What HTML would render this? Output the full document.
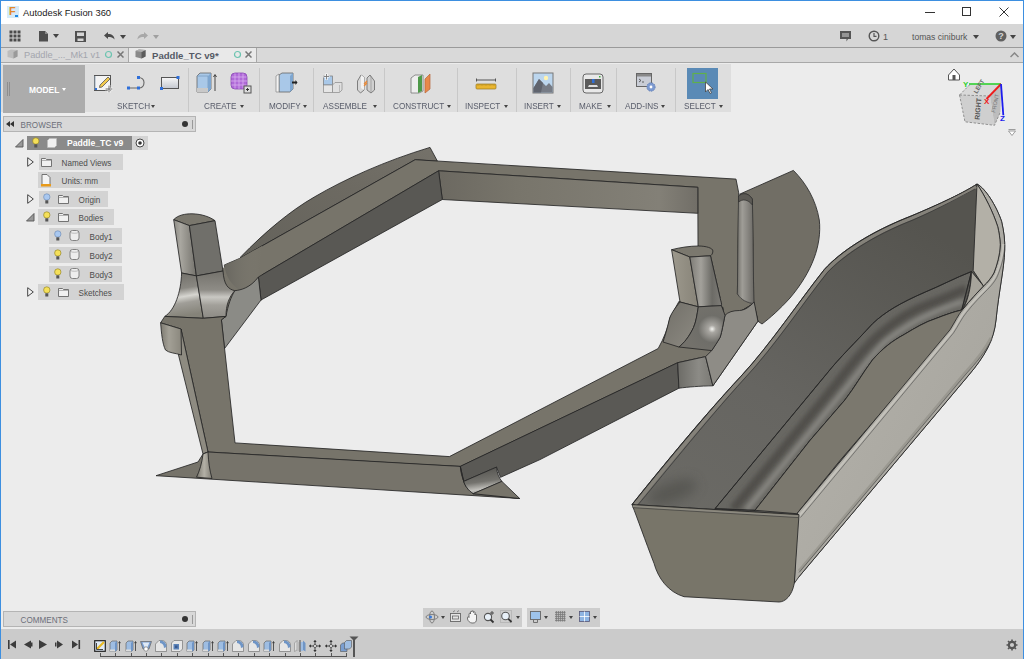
<!DOCTYPE html>
<html><head><meta charset="utf-8">
<style>
*{margin:0;padding:0;box-sizing:border-box}
html,body{width:1024px;height:659px;overflow:hidden;background:#ececec;font-family:"Liberation Sans",sans-serif}
.a{position:absolute}
.t{position:absolute;white-space:nowrap;line-height:1}
#title{left:0;top:0;width:1024px;height:24px;background:#fff;border-top:1px solid #3d8fe0}
#tbar{left:1px;top:24px;width:1022px;height:23px;background:#d6d6d6}
#tbline{left:1px;top:47px;width:1022px;height:1px;background:#9a9a9a}
#tabs{left:1px;top:48px;width:1022px;height:14px;background:#d9d9d9}
#tabline{left:1px;top:62px;width:1022px;height:1px;background:#a8a8a8}
#lb{left:0;top:0;width:1px;height:659px;background:#3d8fe0}
#rb{left:1023px;top:0;width:1px;height:659px;background:#3d8fe0}
.rl{font-size:9.6px;color:#585c6a;top:101.3px;transform:scaleX(0.85);transform-origin:0 0}
.sep{position:absolute;top:68px;width:1px;height:44px;background:#c8c8c8}
.dd{position:absolute;width:0;height:0;border-left:2.5px solid transparent;border-right:2.5px solid transparent;border-top:3px solid #444}
.row{position:absolute;height:16px;background:#d3d3d3}
.bt{font-size:9px;color:#4c4c4c;transform:translate(0.6px,0.6px) scaleX(0.9);transform-origin:0 0}
</style></head><body>
<div id="title" class="a"></div>
<div id="tbar" class="a"></div>
<div id="tbline" class="a"></div>
<div id="tabs" class="a"></div>
<div id="tabline" class="a"></div>

<!-- title -->
<div class="a" style="left:7px;top:6px;width:12px;height:12px;background:#d6ebf8"></div>
<div class="t" style="left:9px;top:6px;font-size:11px;font-weight:bold;color:#e38a2c">F</div>
<div class="a" style="left:15px;top:15px;width:3px;height:2px;background:#1e88e5"></div>
<div class="t" style="left:23px;top:8px;font-size:9.4px;color:#1a1a1a">Autodesk Fusion 360</div>
<!-- window controls -->
<div class="a" style="left:925px;top:12px;width:10px;height:1px;background:#333"></div>
<div class="a" style="left:962px;top:7px;width:9px;height:9px;border:1px solid #333"></div>
<svg class="a" style="left:999px;top:7px" width="10" height="10"><path d="M0.5 0.5L9.5 9.5M9.5 0.5L0.5 9.5" stroke="#333" stroke-width="1"/></svg>

<!-- toolbar -->
<svg class="a" style="left:9px;top:30px" width="12" height="12"><g fill="#4a4a4a"><rect x="0.5" y="0.5" width="3" height="3"/><rect x="4.5" y="0.5" width="3" height="3"/><rect x="8.5" y="0.5" width="3" height="3"/><rect x="0.5" y="4.5" width="3" height="3"/><rect x="4.5" y="4.5" width="3" height="3"/><rect x="8.5" y="4.5" width="3" height="3"/><rect x="0.5" y="8.5" width="3" height="3"/><rect x="4.5" y="8.5" width="3" height="3"/><rect x="8.5" y="8.5" width="3" height="3"/></g></svg>
<svg class="a" style="left:39px;top:31px" width="9" height="11"><path d="M0 0H6L9 3V10.5H0Z" fill="#4f4f4f"/><path d="M6 0V3H9" fill="#8a8a8a"/></svg>
<div class="dd" style="left:53px;top:34px;border-top-width:4px;border-left-width:3px;border-right-width:3px"></div>
<svg class="a" style="left:75px;top:31px" width="11" height="11"><path d="M0 0H11V11H0Z" fill="#505050"/><rect x="2" y="1.5" width="7" height="3.5" fill="#d6d6d6"/><rect x="2.5" y="7.5" width="6" height="2.5" fill="#d6d6d6"/></svg>
<svg class="a" style="left:104px;top:32px" width="11" height="8"><path d="M0 3.5L4 0V2C8 2 10.5 4 10.5 7.5C9 5.5 7 5 4 5V7Z" fill="#4a4a4a"/></svg>
<div class="dd" style="left:120px;top:35px;border-top-width:4px;border-left-width:3px;border-right-width:3px"></div>
<svg class="a" style="left:137px;top:32px" width="11" height="8"><path d="M11 3.5L7 0V2C3 2 0.5 4 0.5 7.5C2 5.5 4 5 7 5V7Z" fill="#a8a8a8"/></svg>
<div class="dd" style="left:153px;top:35px;border-top:4px solid #a0a0a0;border-left-width:3px;border-right-width:3px"></div>

<svg class="a" style="left:840px;top:31px" width="11" height="11"><path d="M0 0H11V8H8L6.5 10.5V8H0Z" fill="#555"/><rect x="2" y="2.5" width="7" height="1" fill="#d6d6d6"/><rect x="2" y="4.5" width="7" height="1" fill="#d6d6d6"/></svg>
<svg class="a" style="left:868px;top:30px" width="12" height="12"><circle cx="6" cy="6" r="4.8" fill="none" stroke="#555" stroke-width="1.4"/><path d="M6 3V6.3H8.5" fill="none" stroke="#555" stroke-width="1.2"/></svg>
<div class="t" style="left:883px;top:32.5px;font-size:9px;color:#555">1</div>
<div class="t" style="left:912px;top:33px;font-size:8.6px;color:#555">tomas ciniburk</div>
<div class="dd" style="left:973px;top:35px;border-top-width:4px;border-left-width:3px;border-right-width:3px"></div>
<svg class="a" style="left:995px;top:30px" width="12" height="12"><circle cx="6" cy="6" r="5.5" fill="#606060"/><text x="6" y="9.3" font-family="Liberation Sans" font-weight="bold" font-size="9" fill="#d6d6d6" text-anchor="middle">?</text></svg>
<div class="dd" style="left:1010px;top:35px;border-top-width:4px;border-left-width:3px;border-right-width:3px"></div>

<!-- tabs -->
<div class="a" style="left:128px;top:48px;width:1px;height:14px;background:#a8a8a8"></div>
<div class="a" style="left:129px;top:48px;width:127px;height:14px;background:#e9e9e9"></div>
<div class="a" style="left:256px;top:48px;width:1px;height:14px;background:#a8a8a8"></div>
<svg class="a" style="left:7px;top:49px" width="11" height="10"><path d="M0.5 2L4 0.5L10.5 1V7.5L6.5 9.5L0.5 8Z" fill="#bdbdbd"/><path d="M6.5 3L10.5 1V7.5L6.5 9.5Z" fill="#9a9a9a"/></svg>
<div class="t" style="left:24px;top:51px;font-size:9.2px;color:#a3a5ad">Paddle_..._Mk1 v1</div>
<svg class="a" style="left:104px;top:50px" width="9" height="9"><circle cx="4.5" cy="4.5" r="3" fill="none" stroke="#6cc4b0" stroke-width="1.2"/></svg>
<svg class="a" style="left:117px;top:51px" width="7" height="7"><path d="M0.5 0.5L6.5 6.5M6.5 0.5L0.5 6.5" stroke="#777" stroke-width="1.5"/></svg>
<svg class="a" style="left:135px;top:49px" width="11" height="10"><path d="M0.5 2L4 0.5L10.5 1V7.5L6.5 9.5L0.5 8Z" fill="#8a8a8a"/><path d="M6.5 3L10.5 1V7.5L6.5 9.5Z" fill="#5c5c5c"/><path d="M0.5 2L4 0.5L10.5 1L6.5 3Z" fill="#b0b0b0"/></svg>
<div class="t" style="left:152px;top:51px;font-size:9.6px;font-weight:bold;color:#555a66">Paddle_TC v9*</div>
<svg class="a" style="left:233px;top:50px" width="9" height="9"><circle cx="4.5" cy="4.5" r="3" fill="none" stroke="#6cc4b0" stroke-width="1.2"/></svg>
<svg class="a" style="left:245px;top:51px" width="7" height="7"><path d="M0.5 0.5L6.5 6.5M6.5 0.5L0.5 6.5" stroke="#777" stroke-width="1.5"/></svg>
<svg class="a" style="left:1010px;top:52px" width="9" height="6"><path d="M0.5 5L4.5 1L8.5 5" fill="none" stroke="#888" stroke-width="1.5"/></svg>

<!-- ribbon -->
<div class="a" style="left:1px;top:64px;width:730px;height:48px;background:#dedede"></div>
<div class="a" style="left:3px;top:65px;width:82px;height:48px;background:#acacac"></div>
<div class="a" style="left:7px;top:82px;width:1px;height:14px;background:#8e8e8e"></div>
<div class="a" style="left:9px;top:82px;width:1px;height:14px;background:#8e8e8e"></div>
<div class="t" style="left:29px;top:86px;font-size:8.4px;font-weight:bold;color:#fff">MODEL</div>
<div class="dd" style="left:62px;top:88px;border-top-color:#fff"></div>

<div class="sep" style="left:188px"></div>
<div class="sep" style="left:259px"></div>
<div class="sep" style="left:313px"></div>
<div class="sep" style="left:384px"></div>
<div class="sep" style="left:457px"></div>
<div class="sep" style="left:516px"></div>
<div class="sep" style="left:570px"></div>
<div class="sep" style="left:616px"></div>
<div class="sep" style="left:675px"></div>

<div class="t rl" style="left:117px">SKETCH</div><div class="dd" style="left:151px;top:104.5px"></div>
<div class="t rl" style="left:204px">CREATE</div><div class="dd" style="left:240px;top:104.5px"></div>
<div class="t rl" style="left:269px">MODIFY</div><div class="dd" style="left:303px;top:104.5px"></div>
<div class="t rl" style="left:323px">ASSEMBLE</div><div class="dd" style="left:373px;top:104.5px"></div>
<div class="t rl" style="left:393px">CONSTRUCT</div><div class="dd" style="left:447px;top:104.5px"></div>
<div class="t rl" style="left:465px">INSPECT</div><div class="dd" style="left:504px;top:104.5px"></div>
<div class="t rl" style="left:524px">INSERT</div><div class="dd" style="left:557px;top:104.5px"></div>
<div class="t rl" style="left:579px">MAKE</div><div class="dd" style="left:607px;top:104.5px"></div>
<div class="t rl" style="left:625px">ADD-INS</div><div class="dd" style="left:661px;top:104.5px"></div>
<div class="t rl" style="left:684px">SELECT</div><div class="dd" style="left:719px;top:104.5px"></div>

<!-- ribbon icons -->
<svg class="a" style="left:93px;top:73px" width="22" height="21">
 <rect x="1.5" y="2.5" width="16" height="15" fill="#f4f4f4" stroke="#555" stroke-width="1"/>
 <path d="M2 17V3" stroke="#9ab" stroke-width="1"/>
 <rect x="2" y="15" width="2" height="2" fill="#2f6fd8"/>
 <path d="M7 12L15 4L17 6L9 14L6.5 14.5Z" fill="#f2c94c" stroke="#555" stroke-width="0.8"/>
 <path d="M16 12V20M12 16H20" stroke="#fff" stroke-width="2.6"/>
 <path d="M16 12.5V19.5M12.5 16H19.5" stroke="#666" stroke-width="1"/>
</svg>
<svg class="a" style="left:126px;top:75px" width="22" height="16">
 <path d="M3 13H12.5C17 13 18 10 18 7.5C18 4.5 16 2.5 12.5 2.5" fill="none" stroke="#666" stroke-width="1.1"/>
 <rect x="1" y="11.5" width="3" height="3" fill="#2f6fd8"/>
 <rect x="11" y="11.5" width="3" height="3" fill="#2f6fd8"/>
 <rect x="11" y="1" width="3" height="3" fill="#2f6fd8"/>
</svg>
<svg class="a" style="left:160px;top:76px" width="20" height="14">
 <defs><linearGradient id="g1" x1="0" y1="0" x2="0" y2="1"><stop offset="0" stop-color="#f7f7f7"/><stop offset="1" stop-color="#c4c8d0"/></linearGradient></defs>
 <rect x="1.5" y="1.5" width="17" height="11" fill="url(#g1)" stroke="#555" stroke-width="1"/>
 <rect x="16.5" y="0" width="3" height="3" fill="#2f6fd8"/>
 <rect x="0" y="11" width="3" height="3" fill="#2f6fd8"/>
</svg>
<svg class="a" style="left:196px;top:72px" width="22" height="22">
 <path d="M1 4L4 1H15V17L12 20H1Z" fill="#a9c8e8" stroke="#666" stroke-width="0.8"/>
 <path d="M1 4H12V20" fill="none" stroke="#7a9cc0" stroke-width="0.8"/>
 <path d="M12 4L15 1V17L12 20Z" fill="#7ea6d0"/>
 <path d="M1 16H12V20H1Z" fill="#c9c9c9"/>
 <path d="M19 19V3M17.5 5L19 2.5L20.5 5" fill="none" stroke="#444" stroke-width="1"/>
</svg>
<svg class="a" style="left:230px;top:72px" width="22" height="22">
 <rect x="1" y="1" width="16" height="16" rx="4" fill="#b06ad8" stroke="#8a4ab4" stroke-width="0.8"/>
 <path d="M5 1.5V16.5M9 1V17M13 1.5V16.5M1.5 5H16.5M1 9H17M1.5 13H16.5" stroke="#d9b0f0" stroke-width="0.8"/>
 <rect x="14" y="14" width="7" height="7" fill="#ddd" stroke="#555" stroke-width="1"/>
 <path d="M16 17.5H19M17.5 16V19" stroke="#333" stroke-width="1"/>
</svg>
<svg class="a" style="left:275px;top:72px" width="23" height="22">
 <path d="M4 3L7 1H18V17L15 20H4Z" fill="#a9c8e8" stroke="#666" stroke-width="0.8"/>
 <path d="M15 4L18 1V17L15 20Z" fill="#7ea6d0"/>
 <path d="M1 4L4 2V20L1 20Z" fill="#f2f2f2" stroke="#888" stroke-width="0.7"/>
 <path d="M17 9.5H20.5V8L22.5 10.5L20.5 13V11.5H17Z" fill="#222"/>
</svg>
<svg class="a" style="left:322px;top:73px" width="21" height="21">
 <rect x="1.5" y="3" width="9" height="9" fill="#a9c8e8" stroke="#777" stroke-width="0.7"/>
 <path d="M1.5 12H10.5V19.5H1.5Z" fill="#e6e6e6" stroke="#888" stroke-width="0.7"/>
 <path d="M10.5 12L13 9.5H20V17L17.5 19.5H10.5Z" fill="#e0e0e0" stroke="#888" stroke-width="0.7"/>
 <path d="M17.5 12V19.5" stroke="#aaa" stroke-width="0.7"/>
 <path d="M4.5 0.5V7M1.5 3.5H7.5" stroke="#fff" stroke-width="2.2"/>
 <path d="M4.5 1V6.5M2 3.5H7" stroke="#777" stroke-width="0.9"/>
</svg>
<svg class="a" style="left:356px;top:73px" width="20" height="21">
 <path d="M1.5 8L5 2L8 4V17L4.5 20L1.5 17Z" fill="#d8d8d8" stroke="#666" stroke-width="0.8"/>
 <path d="M5 2L8 4V17L5 15Z" fill="#f2f2f2"/>
 <path d="M11 5L14 2L18.5 8V17L15 20L11 17Z" fill="#d0d0d0" stroke="#666" stroke-width="0.8"/>
 <path d="M14 2L15 4V20" fill="none" stroke="#888" stroke-width="0.6"/>
 <path d="M8 11L11 8M8 13L11 10" stroke="#e88a3a" stroke-width="1.2"/>
</svg>
<svg class="a" style="left:410px;top:73px" width="21" height="21">
 <path d="M1 5L5 2H13V18L9 20H1Z" fill="#eeeeee" stroke="#777" stroke-width="0.8"/>
 <path d="M8 4L12 2V18L8 20Z" fill="#4f9a4a"/>
 <path d="M15 6L20 1V16L15 20Z" fill="#e8894a" stroke="#b8663a" stroke-width="0.7"/>
</svg>
<svg class="a" style="left:475px;top:76px" width="22" height="14">
 <path d="M1.5 2.5V5.5M20.5 2.5V5.5M1.5 4H20.5" stroke="#555" stroke-width="1"/>
 <rect x="1" y="8" width="20" height="5" rx="1" fill="#eab62f" stroke="#9a7a20" stroke-width="0.7"/>
 <path d="M3 8V10M5 8V9.5M7 8V10M9 8V9.5M11 8V10M13 8V9.5M15 8V10M17 8V9.5M19 8V10" stroke="#9a7a20" stroke-width="0.5"/>
</svg>
<svg class="a" style="left:532px;top:72px" width="22" height="22">
 <rect x="1" y="1" width="20" height="20" fill="#bcd6ee" stroke="#777" stroke-width="1"/>
 <circle cx="14" cy="6" r="2.2" fill="#fff3b0"/>
 <path d="M1.5 20.5V16L7 7L14 14L17 11L20.5 15V20.5Z" fill="#777c86"/>
 <path d="M7 7L11 11L9 20.5H1.5V16Z" fill="#60646e"/>
</svg>
<svg class="a" style="left:582px;top:73px" width="22" height="21">
 <rect x="1" y="1" width="20" height="19" rx="3" fill="#e8e8e8" stroke="#666" stroke-width="1"/>
 <rect x="3" y="6" width="16" height="10" fill="#5a5a5a"/>
 <rect x="10" y="6" width="2.5" height="4" fill="#2f6fd8"/>
 <path d="M6 14H16L15 12H7Z" fill="#ddd"/>
 <rect x="17" y="3" width="1.5" height="1.5" fill="#3ab03a"/>
</svg>
<svg class="a" style="left:636px;top:73px" width="21" height="20">
 <rect x="0.5" y="0.5" width="15" height="13" fill="#c9cdd6" stroke="#666" stroke-width="1"/>
 <rect x="1" y="1" width="14" height="2.5" fill="#888"/>
 <path d="M3 6L5 7.5L3 9M6 9H8" stroke="#444" stroke-width="0.8" fill="none"/>
 <circle cx="15" cy="14" r="4.2" fill="#7d9ad0" stroke="#5a78b0" stroke-width="0.8" stroke-dasharray="1.5 1"/>
 <circle cx="15" cy="14" r="1.4" fill="#fff"/>
</svg>
<div class="a" style="left:687px;top:68px;width:31px;height:31px;background:#5a8ab6"></div>
<svg class="a" style="left:690px;top:71px" width="26" height="24">
 <rect x="3" y="2.5" width="13" height="9" fill="none" stroke="#5fb04a" stroke-width="1.2"/>
 <path d="M15.5 11V21L18 18.5L20 22.5L21.5 21.8L19.5 18H23Z" fill="#fff" stroke="#444" stroke-width="0.8"/>
</svg>

<!-- browser -->
<div class="a" style="left:3px;top:116px;width:193px;height:16px;background:#d8d8d8;border:1px solid #b4b4b4"></div>
<svg class="a" style="left:6px;top:121px" width="9" height="6"><path d="M0 3L4 0V6Z M4 3L8 0V6Z" fill="#333"/></svg>
<div class="t bt" style="left:20px;top:120px;color:#6c6f78">BROWSER</div>
<div class="a" style="left:182px;top:121px;width:6px;height:6px;border-radius:50%;background:#333"></div>
<div class="a" style="left:192px;top:120px;width:1px;height:9px;background:#999"></div>

<svg class="a" style="left:15px;top:139px" width="9" height="9"><path d="M0.5 8L8 0.5V8Z" fill="#999" stroke="#555" stroke-width="0.9"/></svg>
<div class="a" style="left:27px;top:136px;width:105px;height:14px;background:#8a8a8a"></div>
<div class="a" style="left:132px;top:136px;width:16px;height:14px;background:#d3d3d3"></div>
<svg class="a" style="left:135px;top:138px" width="10" height="10"><circle cx="5" cy="5" r="4" fill="#fff" stroke="#444" stroke-width="1"/><circle cx="5" cy="5" r="1.8" fill="#333"/></svg>
<svg class="a" style="left:32px;top:137px" width="8" height="12"><circle cx="3.8" cy="4" r="3.2" fill="#f5e05a" stroke="#8a7a20" stroke-width="0.6"/><rect x="2.3" y="7.3" width="3" height="3.2" fill="#555"/></svg>
<svg class="a" style="left:47px;top:138px" width="10" height="10"><path d="M0.5 2.5L2.5 0.5H9.5V7.5L7.5 9.5H0.5Z" fill="#f0f0f0" stroke="#bbb" stroke-width="0.7"/></svg>
<div class="t" style="left:67px;top:139px;font-size:8.6px;font-weight:bold;color:#fff">Paddle_TC v9</div>

<svg class="a" style="left:27px;top:157px" width="7" height="10"><path d="M0.7 0.7L6.3 5L0.7 9.3Z" fill="#f4f4f4" stroke="#444" stroke-width="1"/></svg>
<div class="row" style="left:39px;top:154px;width:84px"></div>
<svg class="a" style="left:41px;top:157px" width="11" height="10"><path d="M0.5 1.5H4.5L5.5 2.5H10.5V9.5H0.5Z" fill="#f0f0f0" stroke="#666" stroke-width="0.9"/><path d="M0.5 3.5H10.5" stroke="#888" stroke-width="0.6"/></svg>
<div class="t bt" style="left:61px;top:158px">Named Views</div>

<div class="row" style="left:38px;top:172px;width:72px"></div>
<svg class="a" style="left:41px;top:174px" width="10" height="13"><path d="M1 0.5H6L9 3.5V10.5H1Z" fill="#f4f4f4" stroke="#666" stroke-width="0.9"/><rect x="0" y="10" width="10" height="2.5" fill="#e89a1a"/></svg>
<div class="t bt" style="left:61px;top:176px">Units: mm</div>

<svg class="a" style="left:27px;top:194px" width="7" height="10"><path d="M0.7 0.7L6.3 5L0.7 9.3Z" fill="#f4f4f4" stroke="#444" stroke-width="1"/></svg>
<div class="row" style="left:39px;top:191px;width:69px"></div>
<svg class="a" style="left:43px;top:193px" width="8" height="12"><circle cx="3.8" cy="4" r="3.2" fill="#a9c8f0" stroke="#6a86b0" stroke-width="0.6"/><rect x="2.3" y="7.3" width="3" height="3.2" fill="#555"/></svg>
<svg class="a" style="left:58px;top:194px" width="11" height="10"><path d="M0.5 1.5H4.5L5.5 2.5H10.5V9.5H0.5Z" fill="#f0f0f0" stroke="#666" stroke-width="0.9"/><path d="M0.5 3.5H10.5" stroke="#888" stroke-width="0.6"/></svg>
<div class="t bt" style="left:78px;top:195px">Origin</div>

<svg class="a" style="left:26px;top:213px" width="9" height="9"><path d="M0.5 8L8 0.5V8Z" fill="#999" stroke="#555" stroke-width="0.9"/></svg>
<div class="row" style="left:38px;top:209px;width:76px"></div>
<svg class="a" style="left:43px;top:211px" width="8" height="12"><circle cx="3.8" cy="4" r="3.2" fill="#f5e05a" stroke="#8a7a20" stroke-width="0.6"/><rect x="2.3" y="7.3" width="3" height="3.2" fill="#555"/></svg>
<svg class="a" style="left:58px;top:212px" width="11" height="10"><path d="M0.5 1.5H4.5L5.5 2.5H10.5V9.5H0.5Z" fill="#f0f0f0" stroke="#666" stroke-width="0.9"/><path d="M0.5 3.5H10.5" stroke="#888" stroke-width="0.6"/></svg>
<div class="t bt" style="left:78px;top:213px">Bodies</div>

<div class="row" style="left:49px;top:228px;width:73px"></div>
<svg class="a" style="left:54px;top:230px" width="8" height="12"><circle cx="3.8" cy="4" r="3.2" fill="#a9c8f0" stroke="#6a86b0" stroke-width="0.6"/><rect x="2.3" y="7.3" width="3" height="3.2" fill="#555"/></svg>
<svg class="a" style="left:69px;top:230px" width="11" height="11"><rect x="1" y="0.5" width="9" height="10" rx="2.5" fill="#eeeeee" stroke="#777" stroke-width="0.9"/><path d="M1.5 2.5C3 3.5 8 3.5 9.5 2.5" fill="none" stroke="#999" stroke-width="0.6"/></svg>
<div class="t bt" style="left:89px;top:232px">Body1</div>

<div class="row" style="left:49px;top:247px;width:73px"></div>
<svg class="a" style="left:54px;top:249px" width="8" height="12"><circle cx="3.8" cy="4" r="3.2" fill="#f5e05a" stroke="#8a7a20" stroke-width="0.6"/><rect x="2.3" y="7.3" width="3" height="3.2" fill="#555"/></svg>
<svg class="a" style="left:69px;top:249px" width="11" height="11"><rect x="1" y="0.5" width="9" height="10" rx="2.5" fill="#eeeeee" stroke="#777" stroke-width="0.9"/><path d="M1.5 2.5C3 3.5 8 3.5 9.5 2.5" fill="none" stroke="#999" stroke-width="0.6"/></svg>
<div class="t bt" style="left:89px;top:251px">Body2</div>

<div class="row" style="left:49px;top:266px;width:73px"></div>
<svg class="a" style="left:54px;top:268px" width="8" height="12"><circle cx="3.8" cy="4" r="3.2" fill="#f5e05a" stroke="#8a7a20" stroke-width="0.6"/><rect x="2.3" y="7.3" width="3" height="3.2" fill="#555"/></svg>
<svg class="a" style="left:69px;top:268px" width="11" height="11"><rect x="1" y="0.5" width="9" height="10" rx="2.5" fill="#eeeeee" stroke="#777" stroke-width="0.9"/><path d="M1.5 2.5C3 3.5 8 3.5 9.5 2.5" fill="none" stroke="#999" stroke-width="0.6"/></svg>
<div class="t bt" style="left:89px;top:270px">Body3</div>

<svg class="a" style="left:27px;top:287px" width="7" height="10"><path d="M0.7 0.7L6.3 5L0.7 9.3Z" fill="#f4f4f4" stroke="#444" stroke-width="1"/></svg>
<div class="row" style="left:38px;top:284px;width:86px"></div>
<svg class="a" style="left:43px;top:286px" width="8" height="12"><circle cx="3.8" cy="4" r="3.2" fill="#f5e05a" stroke="#8a7a20" stroke-width="0.6"/><rect x="2.3" y="7.3" width="3" height="3.2" fill="#555"/></svg>
<svg class="a" style="left:58px;top:287px" width="11" height="10"><path d="M0.5 1.5H4.5L5.5 2.5H10.5V9.5H0.5Z" fill="#f0f0f0" stroke="#666" stroke-width="0.9"/><path d="M0.5 3.5H10.5" stroke="#888" stroke-width="0.6"/></svg>
<div class="t bt" style="left:78px;top:288px">Sketches</div>

<!-- MODEL_START -->
<svg class="a" style="left:0;top:0" width="1024" height="659" viewBox="0 0 1024 659">
<defs><linearGradient id="filBR" x1="0.35" y1="0" x2="0.55" y2="1"><stop offset="0" stop-color="#52514d"/><stop offset="0.55" stop-color="#74736e"/><stop offset="0.82" stop-color="#c2c1bc"/><stop offset="1" stop-color="#86847e"/></linearGradient><linearGradient id="topWall" gradientUnits="userSpaceOnUse" x1="440" y1="0" x2="698" y2="0"><stop offset="0" stop-color="#6c6961"/><stop offset="0.3" stop-color="#78756b"/><stop offset="0.85" stop-color="#838077"/><stop offset="1" stop-color="#716e67"/></linearGradient><linearGradient id="endF" x1="0" y1="0" x2="1" y2="0"><stop offset="0" stop-color="#6c6b66"/><stop offset="0.6" stop-color="#8c8b86"/><stop offset="1" stop-color="#7a7974"/></linearGradient><linearGradient id="notch" x1="0" y1="0" x2="1" y2="0"><stop offset="0" stop-color="#68665f"/><stop offset="1" stop-color="#827f75" stop-opacity="0"/></linearGradient><linearGradient id="lip" x1="0" y1="0" x2="1" y2="0"><stop offset="0" stop-color="#7d7a71"/><stop offset="0.4" stop-color="#a3a096"/><stop offset="1" stop-color="#8a877d"/></linearGradient><linearGradient id="fillBL" x1="0" y1="0" x2="1" y2="0"><stop offset="0" stop-color="#7a776e"/><stop offset="0.5" stop-color="#b3b0a6"/><stop offset="1" stop-color="#807d74"/></linearGradient><linearGradient id="groove" x1="0" y1="0" x2="1" y2="0"><stop offset="0" stop-color="#74726c"/><stop offset="0.3" stop-color="#9f9d97"/><stop offset="0.6" stop-color="#8a8883"/><stop offset="1" stop-color="#6c6a65"/></linearGradient>
 <linearGradient id="postL" x1="0" y1="0" x2="1" y2="0"><stop offset="0" stop-color="#8d8b85"/><stop offset="0.3" stop-color="#a9a7a0"/><stop offset="1" stop-color="#74726c"/></linearGradient>
 <linearGradient id="postR" x1="0" y1="0" x2="1" y2="0"><stop offset="0" stop-color="#7a7873"/><stop offset="0.5" stop-color="#a7a6a1"/><stop offset="1" stop-color="#5f5e5a"/></linearGradient>
 <linearGradient id="filL" x1="0" y1="0" x2="0.15" y2="1"><stop offset="0" stop-color="#6e6c66"/><stop offset="0.4" stop-color="#8a8882"/><stop offset="0.58" stop-color="#d6d5d0"/><stop offset="0.72" stop-color="#a09e98"/><stop offset="1" stop-color="#858379"/></linearGradient><linearGradient id="filL2" x1="0" y1="0" x2="0" y2="1"><stop offset="0" stop-color="#74726c"/><stop offset="0.4" stop-color="#8e8c86"/><stop offset="0.55" stop-color="#c9c8c3"/><stop offset="0.72" stop-color="#a2a09a"/><stop offset="1" stop-color="#8c8a84"/></linearGradient>
 <radialGradient id="filR" cx="0.72" cy="0.52" r="0.55"><stop offset="0" stop-color="#f4f4f0"/><stop offset="0.15" stop-color="#a8a6a1"/><stop offset="0.55" stop-color="#6f6e69"/><stop offset="1" stop-color="#73716b"/></radialGradient><linearGradient id="rpL" x1="0" y1="0" x2="1" y2="0"><stop offset="0" stop-color="#9d998d"/><stop offset="1" stop-color="#878378"/></linearGradient><linearGradient id="rfL" x1="0" y1="0" x2="1" y2="1"><stop offset="0" stop-color="#706e67"/><stop offset="1" stop-color="#8e8b83"/></linearGradient><linearGradient id="postR2" x1="0" y1="0" x2="1" y2="0"><stop offset="0" stop-color="#7d7b75"/><stop offset="0.35" stop-color="#a3a19b"/><stop offset="0.7" stop-color="#6c6b66"/><stop offset="1" stop-color="#7e7c77"/></linearGradient>
 <linearGradient id="flangeUL" x1="0" y1="1" x2="1" y2="0"><stop offset="0" stop-color="#64625b"/><stop offset="0.6" stop-color="#6d6a62"/><stop offset="1" stop-color="#75726a"/></linearGradient>
 <linearGradient id="innerL" x1="0" y1="1" x2="1" y2="0"><stop offset="0" stop-color="#6a6a66"/><stop offset="0.5" stop-color="#686763"/><stop offset="1" stop-color="#575652"/></linearGradient>
 <linearGradient id="chan" x1="0" y1="0" x2="1" y2="0.35"><stop offset="0" stop-color="#5c5b57"/><stop offset="0.55" stop-color="#6a6965"/><stop offset="0.8" stop-color="#8d8b86"/><stop offset="1" stop-color="#77756f"/></linearGradient>
 <linearGradient id="hull" x1="0" y1="0" x2="1" y2="1"><stop offset="0" stop-color="#b2b0a9"/><stop offset="1" stop-color="#a4a29b"/></linearGradient>
</defs>
<g stroke="#262626" stroke-width="0.85" stroke-linejoin="round">
 <!-- upper-left flange -->
 <path d="M240.6 257 C265 232 290 211 314.2 197.1 C345 179 385 161 430 147.4 L437.5 161.3 L415.2 159.7 L240.6 258Z" fill="url(#flangeUL)"/>
 <!-- right D flange -->
 <path d="M739.6 194.2 L793.4 170.4 C806 183 816 200 819.3 220 C822 245 812 272 790 298 C780 309 770 318 762 324 L757.9 321.2 L753.8 303.4 L752.4 201Z" fill="#716e65"/>
 <!-- top faces (upper-left arm + top arm) -->
 <path d="M240.6 258 L415.2 159.7 L736 179.1 L738.7 192.8 L737.4 293.9 C741 300 748 303 753.8 303.4 L724.5 321 L721.4 305.6 L720.2 298.3 L710.5 255.8 L706 250 L698 246 L697.8 187.3 L438.6 170.8 L258.4 277 C253 284 250 288 245 289 L239.5 290 C232 285 226 278 224.3 265 L240.6 258Z" fill="#77746a"/>
 <path d="M223 268 L240.6 258 L262 246 L262 300 L225 322 L200 322 L200 275Z" fill="#77746a" stroke="none"/>
 <path d="M258.4 277 C253 284 250 288 245 289 L239.5 290 C232 285 226 278 224.3 265 L240.6 258 L262 246Z" fill="url(#notch)" stroke="none"/>
 <!-- groove -->
 <path d="M738.5 196 C742 193 748 192 752.4 199 L753.8 303.4 C748 303 741 300 737.4 293.9Z" fill="url(#groove)" stroke-width="0.5"/>
 <path d="M738.5 196 C742 193 748 192 752.4 199 L752.4 205 C748 199 742 199 738.7 202Z" fill="#5c5a55" stroke-width="0.6"/>
 <!-- top arm inner wall -->
 <path d="M438.6 170.8 L697.8 187.3 L697.8 213.3 L442.3 199.5Z" fill="url(#topWall)"/>
 <!-- upper-left inner wall dark -->
 <path d="M258.4 277 L438.6 170.8 L442.3 199.5 L261 300Z" fill="#595854"/>
 <!-- curved light section at left junction -->
 <path d="M234.8 290.7 C241 290 250 288 258.4 277 L261 300 L224.5 348.6 L221.4 319.8 L226 316.4 C228 305 231 297 234.8 290.7Z" fill="#8b8b86"/>
 <!-- left post -->
 <path d="M173.7 219.7 C178 215 185 213.8 192 213.8 C202 214 210 217 215 220.7 L189.4 225.6Z" fill="#7a776d"/>
 <path d="M173.7 219.7 L189.4 225.6 L196.4 275.9 L181.6 273Z" fill="url(#postL)"/>
 <path d="M189.4 225.6 L215 220.7 L223 271 L196.4 275.9Z" fill="#706f6a"/>
 <!-- left fillet -->
 <path d="M181.6 273 L196.4 275.9 L203.3 318.3 L164.8 316.4 C175 310 181 292 181.6 273Z" fill="url(#filL)"/>
 <path d="M196.4 275.9 L223 271 C224 285 228 289 234.8 290.7 C229 297 226 305 226 316.4 L203.3 318.3Z" fill="url(#filL2)"/>
 <!-- lower frame big face: left arm + bottom arm + lower-right arm top -->
 <path d="M164.8 316.4 L203.3 318.3 L226 316.4 L221.4 319.8 L235 442.9 L449.4 456.6 L658.2 348.5 C664 338 668 328 669.9 318 L679 301.3 L698.7 307.4 L723 307.4 L724.5 321 L753.8 303.4 L757.9 321.2 L712.9 385.8 L705.6 356.6 L677.7 362.7 L460.3 466.4 L420 464.4 L208 452 L181 329 L160.6 322.8Z" fill="#77746a"/>
 <!-- left strip -->
 <path d="M181 329 L208 452 L203 454 L178.5 355Z" fill="#8e8b81"/>
 <!-- left lip -->
 <path d="M160.6 322.8 L181 329 L181.5 355 C175 353 169 353 165.5 350 C162.5 344 161.5 334 160.6 322.8Z" fill="url(#lip)"/>
 <!-- bottom arm front face -->
 <path d="M208 452 L460.3 466.4 L473.2 493.7 L519.7 498.5 L156 475.7 L198 462 L203 454Z" fill="#76736a"/>
 <!-- bottom-left fillet -->
 <path d="M203 454 L208 452 C208.5 462 209.5 470 212 478.5 L196.5 477.2 C199.5 471 202 463 203 454Z" fill="url(#fillBL)"/>
 <!-- lower-right inner dark wall -->
 <path d="M460.3 466.4 L677.7 362.7 L678.9 388.2 L540 459.6 L500.5 477.3 L496.5 467.1 L463.7 481.4Z" fill="#5a5955"/>
 <!-- bottom-right fillet -->
 <path d="M460.3 466.4 L463.7 481.4 C465 486 468 490 473.2 493.7 C466 488 461 478 460.3 466.4Z" fill="#6a6965"/>
 <path d="M463.7 481.4 L496.5 467.1 C497 473 499 478 501.9 481.4 L473.2 493.7 C468 490 465 486 463.7 481.4Z" fill="url(#filBR)"/>
 <path d="M501.9 481.4 L519.7 498.5 L473.2 493.7Z" fill="#77746a"/>
 <!-- right end face of lower-right arm -->
 <path d="M677.7 362.7 L705.6 356.6 L712.9 385.8 C700 386 688 387 678.9 388.2Z" fill="url(#endF)"/>
 <!-- right junction slope face -->
 <path d="M711.7 350.6 L720.2 337.2 C722 331 723 325 725 315.3 C728 312 733 310.5 739.6 310.5 C746 310 750 306 754.2 302 L757.9 321.2 L712.9 385.8 L705.6 356.6Z" fill="#8e8c86"/>
 <!-- right post -->
 <path d="M671.6 249.7 C680 247.5 690 246 698.3 246 C706 246 712.9 248 712.9 251 C712.9 254 711 255.5 710.5 255.8 L689.8 257Z" fill="#7b786e"/>
 <path d="M671.6 249.7 L689.8 257 L698.3 306.8 L680 302Z" fill="url(#rpL)"/>
 <path d="M689.8 257 L710.5 255.8 L720.2 298.3 C721 302 722 304 721.4 305.6 L698.3 306.8Z" fill="url(#postR2)"/>
 <!-- right fillet -->
 <path d="M680 302 L698.3 306.8 C697 315 696 322 693.5 327.5 C689 337 684 343 678.9 347 L663 342 C666 333 668 325 669.2 320 C670 315 675 308 680 302Z" fill="url(#rfL)"/>
 <path d="M698.3 306.8 L721.4 305.6 C722.5 309 724 312 725 315.3 C723 325 722 331 720.2 337.2 C717 343 714 347 711.7 350.6 L678.9 347 C684 343 689 337 693.5 327.5 C696 322 697 315 698.3 306.8Z" fill="url(#filR)"/>
</g>
</svg>
<svg class="a" style="left:0;top:0" width="1024" height="659" viewBox="0 0 1024 659">
<defs><clipPath id="chanClip"><path d="M715 508.7 L826.9 373.5 C840 357 855 343 872.5 323.7 C885 312 900 303 925.6 291.9 C940 286 955 278 971.5 271.5 L961.7 310 C953 312 945 315 936.2 318.4 C925 322 915 328 904.4 334.4 C892 341 882 349 872.5 359.9 C862 374 855 387 844.9 400 L810.2 440.2 L755 510.3Z"/></clipPath><filter id="blur2" x="-20%" y="-20%" width="140%" height="140%"><feGaussianBlur stdDeviation="2.2"/></filter><filter id="blur4" x="-50%" y="-50%" width="200%" height="200%"><feGaussianBlur stdDeviation="6"/></filter>
 <linearGradient id="bInner" x1="0" y1="1" x2="0.6" y2="0"><stop offset="0" stop-color="#6d6c67"/><stop offset="0.5" stop-color="#666561"/><stop offset="1" stop-color="#55544f"/></linearGradient>
 <linearGradient id="bChan" x1="0" y1="0" x2="1" y2="0.7"><stop offset="0" stop-color="#5b5a56"/><stop offset="0.6" stop-color="#686762"/><stop offset="0.85" stop-color="#85847e"/><stop offset="1" stop-color="#74726b"/></linearGradient>
 <linearGradient id="bHull" x1="0" y1="0" x2="1" y2="1"><stop offset="0" stop-color="#b8b6af"/><stop offset="1" stop-color="#a3a19a"/></linearGradient>
 <radialGradient id="bSpot" cx="0.5" cy="0.5" r="0.5"><stop offset="0" stop-color="#4f4e4a"/><stop offset="1" stop-color="#6a6965" stop-opacity="0"/></radialGradient>
</defs>
<g stroke="#262626" stroke-width="0.85" stroke-linejoin="round">
 <path d="M632 504.5 C650 482 700 420 740.9 376.3 C770 345 800 300 824.3 269.5 C840 252 870 232 911.1 216 C940 204 965 192 977 184 C985 188 996 205 1001.6 221.4 C1004 232 1005 240 1004.7 250 C1004 270 999 290 996 320 C994 340 985 356 968 376 L799 576.7 L799 514.6Z" fill="url(#bInner)"/>
 <ellipse cx="672" cy="492" rx="26" ry="10" fill="#4a4945" opacity="0.55" stroke="none" filter="url(#blur4)" transform="rotate(-20 672 492)"/>
 <path d="M715 508.7 L826.9 373.5 C840 357 855 343 872.5 323.7 C885 312 900 303 925.6 291.9 C940 286 955 278 971.5 271.5 L961.7 310 C953 312 945 315 936.2 318.4 C925 322 915 328 904.4 334.4 C892 341 882 349 872.5 359.9 C862 374 855 387 844.9 400 L810.2 440.2 L755 510.3Z" fill="#686762"/>
 <g clip-path="url(#chanClip)" stroke="none"><path d="M733 509.4 L777.4 455.9 L837.5 382.5 C850 366 866 346 880.1 333.9 C895 321 912 310 930.8 303.5 C945 298 958 292 966.4 288.9" fill="none" stroke="#51504c" stroke-width="9" filter="url(#blur2)"/><path d="M746.2 510 L785.2 462.5 L845.3 389.1 C858 374 872 354 885.7 341.3 C900 330 918 319 934.7 312.1 C947 307 957 303 963.6 301.6" fill="none" stroke="#8e8d88" stroke-width="4" filter="url(#blur2)"/></g>
 <path d="M715 508.7 L826.9 373.5 C840 357 855 343 872.5 323.7 C885 312 900 303 925.6 291.9 C940 286 955 278 971.5 271.5 L961.7 310 C953 312 945 315 936.2 318.4 C925 322 915 328 904.4 334.4 C892 341 882 349 872.5 359.9 C862 374 855 387 844.9 400 L810.2 440.2 L755 510.3Z" fill="none"/>
 <path d="M755 510.3 L810.2 440.2 L844.9 400 C855 387 862 374 872.5 359.9 C882 349 892 341 904.4 334.4 C915 328 925 322 936.2 318.4 C945 315 953 312 961.7 310 C967 302 971 290 971.5 271.5 C971 290 968 302 963 310 C958 320 950 333 940 345 L892 400 L840.2 460.3 L796.8 513.7Z" fill="#7b786e"/>
 <path d="M797.5 513 L950 329.8 C955 322 958 315 962.9 309.2 C970 300 978 292 983.5 286 C988 282 991 278 993.9 273 C997 265 1000 255 1000.3 244.7 C1000 238 999 232 997.7 226.6 C993 212 985 196 977 184 C985 188 996 205 1001.6 221.4 C1004 232 1005 240 1004.7 250 C1004 270 999 290 996 320 C994 340 985 356 968 376 L799 576.7 L794.3 583.3Z" fill="url(#bHull)"/>
 <path d="M971.5 271.5 L983.5 286 C978 292 970 300 962.9 309.2 C967 302 971 290 971.5 271.5Z" fill="#a7a49b"/>
 <path d="M799.5 515.5 L952 331.5 C957 324 960 317 965 311 C972 302 980 294 986 288 C991 283 995 278 997 272 C1001 262 1003 252 1003.3 244" fill="none" stroke="#c4c2bb" stroke-width="2.2"/>
 <path d="M800.5 517.5 L953.5 333 C958.5 325.5 961.5 318.5 966.5 312.5 C973.5 303.5 981.5 295.5 987.5 289.5 C992.5 284.5 996.5 279.5 998.5 273.5 C1002.5 263.5 1004.5 253.5 1004.8 245" fill="none" stroke="#444" stroke-width="0.55"/>
 <path d="M977 184 C985 196 993 212 997.7 226.6 C999 232 1000 238 1000.3 244.7 C1000 255 997 265 993.9 273 C991 278 988 282 983.5 286 L973.2 270.5Z" fill="#b3b0a7"/>
 <path d="M635 504.7 C652.5 483.5 702.5 421 743 377.2 C772.5 345.5 801.5 301.5 825.7 271.2 C841.5 254 871 234 912 218 C940 206 963.5 194 976 186.5" fill="none" stroke="#85827a" stroke-width="3.4"/>
 <path d="M632 504.5 C650 482 700 420 740.9 376.3 C770 345 800 300 824.3 269.5 C840 252 870 232 911.1 216 C940 204 965 192 977 184" fill="none" stroke="#262626" stroke-width="0.9"/>
 <path d="M637.8 505 C655 485 705 422 745 378 C775 346 803 303 827 273 C843 256 872 236 913 220 C940 208 962 196 975 189" fill="none" stroke="#333" stroke-width="0.7"/>
 <path d="M799 571 L965 373 C975 362 985 350 991 338" fill="none" stroke="#8f8d86" stroke-width="3" stroke-opacity="0.6"/>
 <path d="M799 572.5 L966 374 C976 363 986 351 992 339" fill="none" stroke="#444" stroke-width="0.6"/>
 <path d="M632 504.5 L799 514.6 L794.3 583.3 C792 596 785 602 779 602 L684 596.7 C668 592 658 578 654 563.3 C645 540 638 520 632 504.5Z" fill="#787569"/>
 <path d="M633 506.5 L798 516.5" fill="none" stroke="#8d8a80" stroke-width="2" />
 <path d="M632.5 507.6 L798.5 517.6" fill="none" stroke="#333" stroke-width="0.6"/>
</g>
</svg>

<!-- MODEL_END -->

<!-- comments -->
<div class="a" style="left:3px;top:611px;width:193px;height:16px;background:#d8d8d8;border:1px solid #b4b4b4"></div>
<div class="t bt" style="left:20px;top:615px;color:#6c6f78">COMMENTS</div>
<div class="a" style="left:182px;top:616px;width:6px;height:6px;border-radius:50%;background:#333"></div>
<div class="a" style="left:192px;top:615px;width:1px;height:9px;background:#999"></div>

<!-- nav toolbar -->
<div class="a" style="left:423px;top:608px;width:99px;height:19px;background:#cdcdcd"></div>
<div class="a" style="left:527px;top:608px;width:73px;height:19px;background:#cdcdcd"></div>
<svg class="a" style="left:425px;top:610px" width="14" height="14"><ellipse cx="7" cy="7" rx="6" ry="2.5" fill="none" stroke="#777" stroke-width="0.9"/><ellipse cx="7" cy="7" rx="2.5" ry="6" fill="none" stroke="#777" stroke-width="0.9"/><circle cx="5.5" cy="7" r="1.5" fill="#3a7ad8"/></svg>
<div class="dd" style="left:441px;top:616px"></div>
<svg class="a" style="left:450px;top:610px" width="12" height="13"><rect x="0.5" y="3.5" width="10" height="8" fill="#e4e4e4" stroke="#666" stroke-width="0.9"/><rect x="2.5" y="6" width="6" height="3" fill="none" stroke="#666" stroke-width="0.8"/><path d="M3 2L5 0.5M7 2L9 0.5" stroke="#666" stroke-width="0.7"/></svg>
<svg class="a" style="left:467px;top:610px" width="12" height="14"><path d="M2 7V4C2 3 3.5 3 3.5 4V2C3.5 1 5 1 5 2V1.5C5 0.5 6.5 0.5 6.5 1.5V2.5C6.5 1.5 8 1.5 8 2.5V5C8 4 9.5 4 9.5 5V9C9.5 12 8 13 6 13H5C3 13 1 11 0.5 9L0.5 7.5C0.5 6.5 2 6.5 2 7.5Z" fill="#f4f4f4" stroke="#555" stroke-width="0.8"/></svg>
<svg class="a" style="left:483px;top:610px" width="12" height="14"><circle cx="5" cy="7" r="3.6" fill="#e8f0f8" stroke="#555" stroke-width="1.1"/><path d="M7.5 9.5L10.5 12.5" stroke="#333" stroke-width="1.8"/><path d="M9 1V5M7 3H11" stroke="#444" stroke-width="0.9"/></svg>
<svg class="a" style="left:500px;top:610px" width="13" height="14"><rect x="0.5" y="0.5" width="11" height="12" fill="none" stroke="#888" stroke-width="0.6" stroke-dasharray="1 1"/><circle cx="5.5" cy="6" r="3.8" fill="#e8f0f8" stroke="#555" stroke-width="1.1"/><path d="M8.3 8.8L11.5 12" stroke="#333" stroke-width="1.8"/></svg>
<div class="dd" style="left:516px;top:616px"></div>
<svg class="a" style="left:530px;top:611px" width="12" height="13"><rect x="0.5" y="0.5" width="10" height="8" fill="#9ec3ea" stroke="#666" stroke-width="0.9"/><path d="M3.5 9V11.5H7.5V9" fill="none" stroke="#666" stroke-width="0.9"/></svg>
<div class="dd" style="left:544px;top:616px"></div>
<svg class="a" style="left:555px;top:611px" width="11" height="11"><rect x="0" y="0" width="10.5" height="10.5" fill="#bbb"/><path d="M1.5 0V10.5M3.5 0V10.5M5.5 0V10.5M7.5 0V10.5M9.5 0V10.5M0 1.5H10.5M0 3.5H10.5M0 5.5H10.5M0 7.5H10.5M0 9.5H10.5" stroke="#777" stroke-width="0.7"/></svg>
<div class="dd" style="left:569px;top:616px"></div>
<svg class="a" style="left:579px;top:611px" width="11" height="11"><rect x="0.5" y="0.5" width="10" height="10" fill="#8eb4e2" stroke="#557" stroke-width="0.8"/><path d="M5.5 0.5V10.5M0.5 5.5H10.5" stroke="#fff" stroke-width="0.8"/></svg>
<div class="dd" style="left:593px;top:616px"></div>

<!-- timeline -->
<div class="a" style="left:1px;top:629px;width:1022px;height:30px;background:#cbcbcb"></div>
<svg class="a" style="left:7px;top:639px" width="76" height="11">
 <g fill="#3c3c3c">
 <rect x="1" y="1" width="1.6" height="9"/><path d="M9 1.5V9.5L3 5.5Z"/>
 <path d="M24 1.5V9.5L17 5.5Z"/><rect x="24" y="3.5" width="1.5" height="4"/>
 <path d="M32 1V10L40 5.5Z"/>
 <path d="M50 1.5V9.5L56 5.5Z"/><rect x="48" y="3.5" width="1.5" height="4"/>
 <path d="M65 1.5V9.5L71 5.5Z"/><rect x="71.5" y="1" width="1.6" height="9"/>
 </g>
</svg>
<div id="tl"></div>
<svg class="a" style="left:93.8px;top:639.5px" width="12" height="12"><rect x="0.7" y="0.7" width="10.6" height="10.6" fill="#dfe9f5" stroke="#222" stroke-width="1.2"/><path d="M3 9L10 2" stroke="#e8b820" stroke-width="2.2"/><path d="M2.5 3V9.5H9" fill="none" stroke="#333" stroke-width="0.9"/></svg>
<div class="a" style="left:100px;top:653px;width:1px;height:4px;background:#555"></div>
<svg class="a" style="left:109.2px;top:639.5px" width="12" height="12"><path d="M1 3L3 1H8V10L6 11.5H1Z" fill="#9ebde2" stroke="#666" stroke-width="0.7"/><path d="M6 3L8 1V10L6 11.5Z" fill="#6f95c6"/><path d="M1 9.5H6V11.5H1Z" fill="#ddd"/><path d="M10.5 11V2M9.5 3.2L10.5 1.5L11.5 3.2" stroke="#333" stroke-width="0.8" fill="none"/></svg>
<div class="a" style="left:115px;top:653px;width:1px;height:4px;background:#555"></div>
<svg class="a" style="left:124.6px;top:639.5px" width="12" height="12"><path d="M1 3L3 1H8V10L6 11.5H1Z" fill="#9ebde2" stroke="#666" stroke-width="0.7"/><path d="M6 3L8 1V10L6 11.5Z" fill="#6f95c6"/><path d="M1 9.5H6V11.5H1Z" fill="#ddd"/><path d="M10.5 11V2M9.5 3.2L10.5 1.5L11.5 3.2" stroke="#333" stroke-width="0.8" fill="none"/></svg>
<div class="a" style="left:131px;top:653px;width:1px;height:4px;background:#555"></div>
<svg class="a" style="left:140.0px;top:639.5px" width="12" height="12"><path d="M0.5 1.5H11.5L9 9H3Z" fill="#7a9ed0" stroke="#666" stroke-width="0.7"/><path d="M2.5 2.5H9.5L7.5 7H4.5Z" fill="#dfe9f5"/><circle cx="6" cy="9" r="2.2" fill="#fff" stroke="#777" stroke-width="0.7"/></svg>
<div class="a" style="left:146px;top:653px;width:1px;height:4px;background:#555"></div>
<svg class="a" style="left:155.4px;top:639.5px" width="12" height="12"><path d="M0.5 4L4 0.5H7C10 0.5 11.5 3 11.5 5V11.5H0.5Z" fill="#e6e6e6" stroke="#777" stroke-width="0.7"/><path d="M5 0.5C9 0.5 11.5 3 11.5 7L9 8C9 5 7.5 3.5 5 3Z" fill="#6f95c6"/></svg>
<div class="a" style="left:161px;top:653px;width:1px;height:4px;background:#555"></div>
<svg class="a" style="left:170.8px;top:639.5px" width="12" height="12"><path d="M0.5 3L3 0.5H11.5V9L9 11.5H0.5Z" fill="#e6e6e6" stroke="#777" stroke-width="0.7"/><rect x="2.5" y="4" width="5.5" height="5.5" fill="#5a82b8"/><rect x="4" y="5.5" width="2.5" height="2.5" fill="#3a5a90"/></svg>
<div class="a" style="left:177px;top:653px;width:1px;height:4px;background:#555"></div>
<svg class="a" style="left:186.2px;top:639.5px" width="12" height="12"><path d="M1 3L3 1H8V10L6 11.5H1Z" fill="#9ebde2" stroke="#666" stroke-width="0.7"/><path d="M6 3L8 1V10L6 11.5Z" fill="#6f95c6"/><path d="M1 9.5H6V11.5H1Z" fill="#ddd"/><path d="M10.5 11V2M9.5 3.2L10.5 1.5L11.5 3.2" stroke="#333" stroke-width="0.8" fill="none"/></svg>
<div class="a" style="left:192px;top:653px;width:1px;height:4px;background:#555"></div>
<svg class="a" style="left:201.6px;top:639.5px" width="12" height="12"><path d="M1 3L3 1H8V10L6 11.5H1Z" fill="#9ebde2" stroke="#666" stroke-width="0.7"/><path d="M6 3L8 1V10L6 11.5Z" fill="#6f95c6"/><path d="M1 9.5H6V11.5H1Z" fill="#ddd"/><path d="M10.5 11V2M9.5 3.2L10.5 1.5L11.5 3.2" stroke="#333" stroke-width="0.8" fill="none"/></svg>
<div class="a" style="left:208px;top:653px;width:1px;height:4px;background:#555"></div>
<svg class="a" style="left:217.0px;top:639.5px" width="12" height="12"><path d="M1 3L3 1H8V10L6 11.5H1Z" fill="#9ebde2" stroke="#666" stroke-width="0.7"/><path d="M6 3L8 1V10L6 11.5Z" fill="#6f95c6"/><path d="M1 9.5H6V11.5H1Z" fill="#ddd"/><path d="M10.5 11V2M9.5 3.2L10.5 1.5L11.5 3.2" stroke="#333" stroke-width="0.8" fill="none"/></svg>
<div class="a" style="left:223px;top:653px;width:1px;height:4px;background:#555"></div>
<svg class="a" style="left:232.4px;top:639.5px" width="12" height="12"><path d="M0.5 4L4 0.5H7C10 0.5 11.5 3 11.5 5V11.5H0.5Z" fill="#e6e6e6" stroke="#777" stroke-width="0.7"/><path d="M5 0.5C9 0.5 11.5 3 11.5 7L9 8C9 5 7.5 3.5 5 3Z" fill="#6f95c6"/></svg>
<div class="a" style="left:238px;top:653px;width:1px;height:4px;background:#555"></div>
<svg class="a" style="left:247.8px;top:639.5px" width="12" height="12"><path d="M0.5 4L4 0.5H7C10 0.5 11.5 3 11.5 5V11.5H0.5Z" fill="#e6e6e6" stroke="#777" stroke-width="0.7"/><path d="M5 0.5C9 0.5 11.5 3 11.5 7L9 8C9 5 7.5 3.5 5 3Z" fill="#6f95c6"/></svg>
<div class="a" style="left:254px;top:653px;width:1px;height:4px;background:#555"></div>
<svg class="a" style="left:263.2px;top:639.5px" width="12" height="12"><path d="M1 3L3 1H8V10L6 11.5H1Z" fill="#9ebde2" stroke="#666" stroke-width="0.7"/><path d="M6 3L8 1V10L6 11.5Z" fill="#6f95c6"/><path d="M1 9.5H6V11.5H1Z" fill="#ddd"/><path d="M10.5 11V2M9.5 3.2L10.5 1.5L11.5 3.2" stroke="#333" stroke-width="0.8" fill="none"/></svg>
<div class="a" style="left:269px;top:653px;width:1px;height:4px;background:#555"></div>
<svg class="a" style="left:278.6px;top:639.5px" width="12" height="12"><path d="M0.5 4L4 0.5H7C10 0.5 11.5 3 11.5 5V11.5H0.5Z" fill="#e6e6e6" stroke="#777" stroke-width="0.7"/><path d="M5 0.5C9 0.5 11.5 3 11.5 7L9 8C9 5 7.5 3.5 5 3Z" fill="#6f95c6"/></svg>
<div class="a" style="left:285px;top:653px;width:1px;height:4px;background:#555"></div>
<svg class="a" style="left:294.0px;top:639.5px" width="12" height="12"><path d="M0.5 3L3 0.5V10L0.5 11.5Z" fill="#ddd" stroke="#888" stroke-width="0.6"/><path d="M3 2H5.5V11H3Z" fill="#bbb"/><path d="M11.5 3L9 0.5V10L11.5 11.5Z" fill="#6f95c6"/><path d="M9 2H6.5V11H9Z" fill="#9ebde2"/><path d="M6 0V12" stroke="#333" stroke-width="0.8"/></svg>
<div class="a" style="left:300px;top:653px;width:1px;height:4px;background:#555"></div>
<svg class="a" style="left:309.4px;top:639.5px" width="12" height="12"><path d="M6 0.5V11.5M0.5 6H11.5" stroke="#333" stroke-width="0.9"/><path d="M6 0L4.3 2H7.7ZM6 12L4.3 10H7.7ZM0 6L2 4.3V7.7ZM12 6L10 4.3V7.7Z" fill="#333"/><circle cx="6" cy="6" r="1.5" fill="#fff" stroke="#333" stroke-width="0.7"/></svg>
<div class="a" style="left:315px;top:653px;width:1px;height:4px;background:#555"></div>
<svg class="a" style="left:324.8px;top:639.5px" width="12" height="12"><path d="M6 0.5V11.5M0.5 6H11.5" stroke="#333" stroke-width="0.9"/><path d="M6 0L4.3 2H7.7ZM6 12L4.3 10H7.7ZM0 6L2 4.3V7.7ZM12 6L10 4.3V7.7Z" fill="#333"/><circle cx="6" cy="6" r="1.5" fill="#fff" stroke="#333" stroke-width="0.7"/></svg>
<div class="a" style="left:331px;top:653px;width:1px;height:4px;background:#555"></div>
<svg class="a" style="left:340.2px;top:639.5px" width="12" height="12"><path d="M0.5 5L2.5 3H7V11.5H0.5Z" fill="#7a9ed0" stroke="#555" stroke-width="0.6"/><path d="M4.5 2.5L6.5 0.5H11.5V7L9.5 9H4.5Z" fill="#9ebde2" stroke="#555" stroke-width="0.6"/></svg>
<div class="a" style="left:346px;top:653px;width:1px;height:4px;background:#555"></div>
<svg class="a" style="left:349px;top:636px" width="10" height="21"><path d="M0.5 0.5H9.5L6 4H4Z" fill="#555"/><rect x="4" y="3" width="2" height="18" fill="#555"/></svg>
<div class="a" style="left:100px;top:656px;width:246px;height:1px;background:#555"></div>
<svg class="a" style="left:1006px;top:639px" width="12" height="12"><circle cx="6" cy="6" r="3.2" fill="none" stroke="#555" stroke-width="2.2"/><path d="M6 0.5V3M6 9V11.5M0.5 6H3M9 6H11.5M2 2L3.8 3.8M8.2 8.2L10 10M2 10L3.8 8.2M8.2 3.8L10 2" stroke="#555" stroke-width="1.6"/></svg>

<!-- viewcube -->
<svg class="a" style="left:940px;top:62px" width="84" height="78">
 <path d="M8.5 13L14 7L19.5 13V18H8.5Z" fill="#fff" stroke="#555" stroke-width="1"/>
 <rect x="12.5" y="13" width="3" height="5" fill="#555"/>
 <path d="M19.5 33L30 22.5L61 22L50 34Z" fill="#d9d9d9"/>
 <path d="M19.5 33L50 34L54.5 63.3L25 59.8Z" fill="#cfcfcf"/>
 <path d="M50 34L61 22L60.5 49.7L54.5 63.3Z" fill="#bdbdbd"/>
 <path d="M19.5 33L30 22.5M19.5 33L50 34M19.5 33L25 59.8L54.5 63.3L60.5 49.7" fill="none" stroke="#888" stroke-width="0.9" stroke-dasharray="2.5 1.5"/>
 <path d="M29 22H61" stroke="#30d030" stroke-width="1.6"/>
 <path d="M61 22L46.5 37" stroke="#ee1c1c" stroke-width="1.8"/>
 <path d="M61 22L63.3 53.3" stroke="#1c1cee" stroke-width="1.8"/>
 <text x="23" y="25" font-family="Liberation Sans" font-size="8" font-weight="bold" fill="#30d030">Y</text>
 <text x="44" y="42" font-family="Liberation Sans" font-size="8" font-weight="bold" fill="#ee1c1c">X</text>
 <text x="60" y="59" font-family="Liberation Sans" font-size="8" font-weight="bold" fill="#1c1cee">Z</text>
 <text x="0" y="0" font-family="Liberation Sans" font-size="7" font-weight="bold" fill="#555" transform="translate(39.5,58) rotate(-85)">RIGHT</text>
 <text x="0" y="0" font-family="Liberation Sans" font-size="6" font-weight="bold" fill="#666" transform="translate(37,32) rotate(-60)">LEFT</text>
 <text x="0" y="0" font-family="Liberation Sans" font-size="5.5" fill="#777" transform="translate(55,51) rotate(-78)">FRONT</text>
 <path d="M68.5 67.5H75.5M68.5 69H75.5L72 73.5Z" fill="#fff" stroke="#888" stroke-width="0.8"/>
</svg>
<div id="lb" class="a"></div>
<div id="rb" class="a"></div>
</body></html>
